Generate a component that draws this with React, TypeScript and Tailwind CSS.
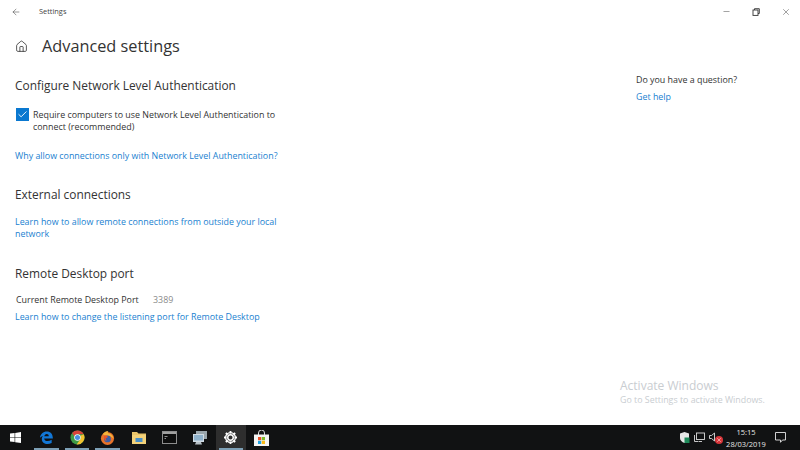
import React from "react";
import { ArrowLeft, Home, Minus, X, Check } from "lucide-react";

const F = { fontFamily: '"Open Sans", sans-serif' };

function Slot({ children, under, active }: { children: React.ReactNode; under?: boolean; active?: boolean }) {
  return (
    <div className={`relative flex h-full w-[30.8px] shrink-0 items-center justify-center ${active ? "bg-[#2e2e2e]" : ""}`}>
      {children}
      {under && <div className="absolute bottom-0 left-[3px] right-[3px] h-[2px] bg-[#7d9fb5]" />}
    </div>
  );
}

export default function App() {
  return (
    <div className="relative flex h-[450px] w-[800px] flex-col overflow-hidden bg-white text-[#1a1a1a]" style={F}>
      <div className="flex h-[22px] shrink-0 items-center pt-[1px]">
        <div className="flex w-[39px] justify-center pl-[1px] pr-[8px]">
          <ArrowLeft size={10} strokeWidth={1.2} className="text-[#333]" />
        </div>
        <span className="text-[7.4px] text-[#444]">Settings</span>
        <div className="ml-auto flex items-center gap-[21px] pr-[9px]">
          <Minus size={9} strokeWidth={1.2} className="text-[#333]" />
          <svg width="8" height="8" viewBox="0 0 8 8" fill="none" stroke="#333" strokeWidth="0.9">
            <rect x="1" y="2" width="5" height="5.4" />
            <path d="M2.5 2V0.7H7.3V5.5H6" />
          </svg>
          <X size={10} strokeWidth={1.1} className="text-[#333]" />
        </div>
      </div>

      <div className="flex min-h-0 flex-1">
        <div className="w-[620px] shrink-0 pl-[15px]">
          <div className="mt-[11px] flex h-[26px] items-center">
            <Home size={13} strokeWidth={1.5} className="text-[#333]" />
            <h1 className="ml-[14px] text-[16.3px] text-[#333]">Advanced settings</h1>
          </div>

          <h2 className="mt-[16px] h-[20px] text-[11.9px] leading-[20px] text-[#333]">Configure Network Level Authentication</h2>
          <div className="mt-[13px] flex">
            <div className="ml-[1px] flex h-[13px] w-[13px] shrink-0 items-center justify-center bg-[#0a78d0]">
              <Check size={11} strokeWidth={2} className="text-white" />
            </div>
            <p className="ml-[4px] mt-[1px] w-[250px] text-[8.9px] leading-[12px] text-[#333]">
              Require computers to use Network Level Authentication to connect (recommended)
            </p>
          </div>
          <p className="mt-[16px] text-[8.9px] leading-[13px] text-[#1a7fd0]">Why allow connections only with Network Level Authentication?</p>

          <h2 className="mt-[21.5px] h-[20px] text-[11.9px] leading-[20px] text-[#333]">External connections</h2>
          <p className="mt-[12px] w-[270px] text-[8.9px] leading-[12px] text-[#1a7fd0]">
            Learn how to allow remote connections from outside your local network
          </p>

          <h2 className="mt-[23px] h-[20px] text-[11.9px] leading-[20px] text-[#333]">Remote Desktop port</h2>
          <div className="ml-[1px] mt-[10.5px] flex text-[8.9px] leading-[13px] text-[#333]">
            <span className="w-[137px]">Current Remote Desktop Port</span>
            <span className="text-[#8a8a8a]">3389</span>
          </div>
          <p className="mt-[4px] text-[8.9px] leading-[13px] text-[#1a7fd0]">Learn how to change the listening port for Remote Desktop</p>
        </div>

        <div className="pl-[16px] pt-[51px]">
          <p className="text-[8.9px] leading-[13px] text-[#333]">Do you have a question?</p>
          <p className="mt-[4px] text-[8.9px] leading-[13px] text-[#1a7fd0]">Get help</p>
        </div>
      </div>

      <div className="absolute left-[620px] top-[378px] text-[#c9cdd1]">
        <p className="text-[12px] leading-[16px]">Activate Windows</p>
        <p className="text-[8.85px] leading-[13px]">Go to Settings to activate Windows.</p>
      </div>

      <div className="flex h-[25px] shrink-0 items-center bg-[#111213] text-white">
        <Slot>
          <svg width="11" height="11" viewBox="0 0 11 11" fill="#fff">
            <path d="M0 1.6 4.6 1v4.2H0zM5.2.9 11 0v5.2H5.2zM0 5.8h4.6V10L0 9.4zM5.2 5.8H11V11l-5.8-.8z" />
          </svg>
        </Slot>
        <Slot under>
          <svg width="15" height="16" viewBox="0 0 16 16" className="ml-[1px]">
            <path d="M1 8C1.5 3.5 4.5 1 8.3 1c4 0 6.5 2.8 6.5 7.4H5.500c.2 2.8 4 3.800 8 1.500v3.400c-5 2.300-10.500.6-10.500-4.300 0-1.300.5-2.400 1.300-3.100C2.800 6.300 1.800 7 1 8zm4.600-1.800h4.800c0-1.700-.7-2.500-2.200-2.500-1.400 0-2.300 1-2.600 2.500z" fill="#1277d6" />
          </svg>
        </Slot>
        <Slot under>
          <svg width="15" height="15" viewBox="0 0 16 16" className="ml-[1px]">
            <circle cx="8" cy="8" r="7.500" fill="#3f9b45" />
            <path d="M8 .5A7.500 7.500 0 0 1 14.600 4.500H8A3.500 3.500 0 0 0 4.700 6.800L2.300 3.100A7.500 7.500 0 0 1 8 .5z" fill="#d8433a" />
            <path d="M14.600 4.500A7.500 7.500 0 0 1 7 15.400L10.800 10A3.500 3.500 0 0 0 11 6z" fill="#f2c230" />
            <circle cx="8" cy="8" r="3.500" fill="#fff" />
            <circle cx="8" cy="8" r="2.700" fill="#4a8fe0" />
          </svg>
        </Slot>
        <Slot under>
          <svg width="15" height="16" viewBox="0 0 16 16">
            <circle cx="8" cy="8.500" r="7" fill="#e8732a" />
            <path d="M3 4c1-2 3-3.500 6-3.500-1 1-1 2 0 2.500 2.500.5 5 2.500 5.500 5.500L11 6 5 5z" fill="#f5b33a" />
            <circle cx="8" cy="9" r="3.600" fill="#3a5fa8" />
            <path d="M4.500 5.500C6 4.800 8 5.500 8.500 7L6 8.500 7 11c-2-.3-3.500-3.500-2.500-5.500z" fill="#e8532a" />
          </svg>
        </Slot>
        <Slot>
          <svg width="14" height="13" viewBox="0 0 14 13">
            <path d="M0 1h5l1.500 1.500H14V5H0z" fill="#e9c46a" />
            <rect y="4" width="14" height="9" fill="#f3d27a" />
            <rect x="3.500" y="7" width="7" height="4" fill="#4a90c8" />
          </svg>
        </Slot>
        <Slot>
          <svg width="15" height="13" viewBox="0 0 15 13">
            <rect x=".5" y=".5" width="14" height="12" fill="#0d0d0d" stroke="#8d8d8d" />
            <rect x="1" y="1" width="13" height="2" fill="#a0a0a0" />
            <path d="M2.500 5h3v.8h-3zM2.500 7h1.500v.8h-1.500z" fill="#bbb" />
          </svg>
        </Slot>
        <Slot>
          <svg width="16" height="14" viewBox="0 0 16 14">
            <rect x="4" y="0" width="11" height="8" fill="#9aa6ad" />
            <rect x="1" y="3" width="11" height="8" fill="#d0dbe3" />
            <rect x="2" y="4" width="9" height="5.500" fill="#8fb2cc" />
            <path d="M4 11h5l1 2.500H3z" fill="#b7c0c6" />
          </svg>
        </Slot>
        <Slot active under>
          <svg width="13" height="13" viewBox="0 0 16 16" fill="none" stroke="#fff">
            <circle cx="8" cy="8" r="3.400" strokeWidth="1.800" />
            <circle cx="8" cy="8" r="6" strokeWidth="1.500" />
            <path d="M8 0v3M8 13v3M0 8h3M13 8h3M2.300 2.300l2.100 2.100M11.600 11.600l2.100 2.100M2.300 13.700l2.100-2.100M11.600 4.400l2.100-2.100" strokeWidth="2.200" />
          </svg>
        </Slot>
        <Slot>
          <svg width="15" height="16" viewBox="0 0 15 16">
            <path d="M4.500 5V3a3 3 0 0 1 6 0v2" fill="none" stroke="#ddd" />
            <rect y="4.500" width="15" height="11.500" fill="#f4f4f4" />
            <rect x="4" y="7" width="3.200" height="3.200" fill="#e8502a" />
            <rect x="7.800" y="7" width="3.200" height="3.200" fill="#7fba2a" />
            <rect x="4" y="10.800" width="3.200" height="3.200" fill="#1ea1e0" />
            <rect x="7.800" y="10.800" width="3.200" height="3.200" fill="#f9b916" />
          </svg>
        </Slot>

        <div className="ml-auto flex h-full items-center">
          <svg width="11" height="11" viewBox="0 0 11 11" className="mr-[4px]">
            <path d="M5.500 0 10 1.500V6c0 2.500-2 4-4.500 5C3 10 1 8.500 1 6V1.500z" fill="#e8e8e8" />
            <path d="M5.500 5.500h5V11h-5z" fill="#1f8a5a" />
          </svg>
          <svg width="11" height="11" viewBox="0 0 11 11" fill="none" stroke="#ddd" strokeWidth="0.9" className="mr-[4px]">
            <rect x="2.500" y="1" width="8" height="6.500" />
            <path d="M0.500 3v6.500h4M5 9.500h3" />
          </svg>
          <div className="relative mr-[4px] h-[11px] w-[14px]">
            <svg width="7" height="10" viewBox="0 0 7 10" fill="none" stroke="#ddd" strokeWidth="0.9">
              <path d="M0.500 3.500h2L5.500 1v8L2.500 6.500h-2z" />
            </svg>
            <div className="absolute bottom-[-1px] right-0 flex h-[8px] w-[8px] items-center justify-center rounded-full bg-[#d9363a]">
              <X size={6} strokeWidth={2} className="text-white" />
            </div>
          </div>
          <div className="mr-[10px] flex w-[38px] flex-col items-center text-[7.5px] leading-[12px] text-[#e6e6e6]">
            <span>15:15</span>
            <span className="whitespace-nowrap">28/03/2019</span>
          </div>
          <svg width="11" height="11" viewBox="0 0 11 11" fill="none" stroke="#e6e6e6" strokeWidth="0.9" className="mr-[14px]">
            <path d="M.5.500h10v7.500H7.500L5.500 10.300 5.500 8H.5z" />
          </svg>
        </div>
      </div>
    </div>
  );
}
